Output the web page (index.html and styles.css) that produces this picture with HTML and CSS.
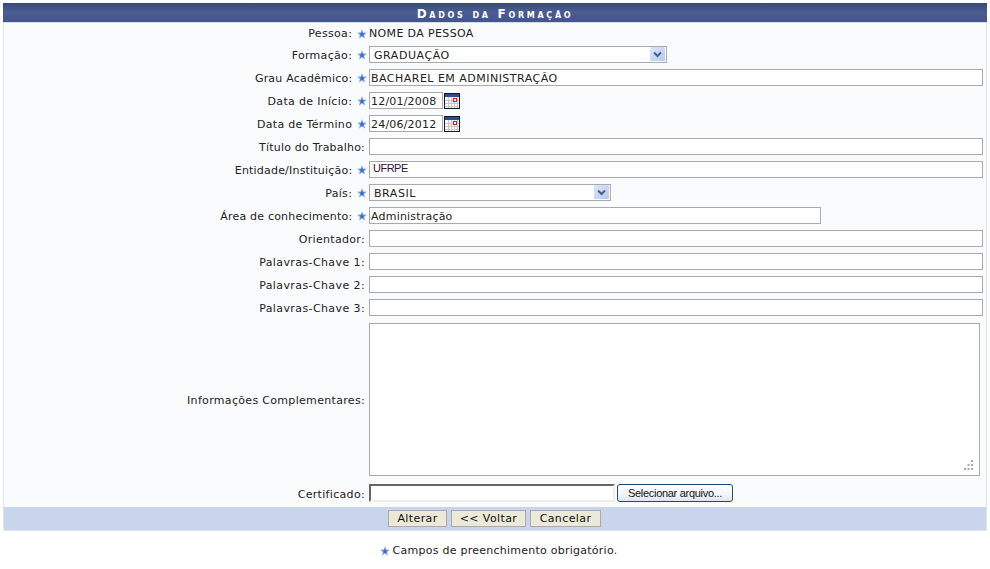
FILE: index.html
```html
<!DOCTYPE html>
<html lang="pt-BR">
<head>
<meta charset="utf-8">
<title>Dados da Formação</title>
<link rel="stylesheet" href="styles.css">
</head>
<body>
<svg class="defs" width="0" height="0" aria-hidden="true">
  <symbol id="star" viewBox="0 0 10 10">
    <path d="M5 .3 6.300 3.500 9.800 3.700 7.100 5.900 8 9.600 5 7.600 2 9.600 2.900 5.900.2 3.700 3.700 3.500Z" fill="#7ea2e6"/>
    <path d="M5 2.500 5.800 4.400 7.600 4.600 6.200 5.800 6.600 7.700 5 6.600 3.400 7.700 3.800 5.800 2.400 4.600 4.200 4.400Z" fill="#3a66bd"/>
  </symbol>
  <symbol id="cal" viewBox="0 0 16 16">
    <rect x=".5" y=".5" width="15" height="15" fill="#fff" stroke="#10182c"/>
    <rect x="1" y="1" width="14" height="3" fill="#2e4a90"/>
    <path d="M1 7.500H15M1 10.500H15M1 13.500H15M4.500 4V15M7.500 4V15M10.500 4V15M13.500 4V15" stroke="#c8c8c8" fill="none"/>
    <rect x="9.500" y="5.500" width="3" height="3" fill="#fff" stroke="#e8141c"/>
  </symbol>
  <symbol id="arrow" viewBox="0 0 16 15">
    <defs>
      <linearGradient id="arrowbg" x1="0" y1="0" x2="1" y2="1">
        <stop offset="0" stop-color="#dde7fb"/>
        <stop offset="1" stop-color="#b4c7f2"/>
      </linearGradient>
    </defs>
    <rect width="15" height="14" rx="1" fill="url(#arrowbg)"/>
    <path d="M4 5.500 7.500 9 11 5.500" fill="none" stroke="#4d6185" stroke-width="2"/>
  </symbol>
  <symbol id="grip" viewBox="0 0 10 10">
    <path d="M7 0h2v2H7zM3.500 4h2v2h-2zM7 4h2v2H7zM0 8h2v2H0zM3.500 8h2v2h-2zM7 8h2v2H7z" fill="#aaa"/>
  </symbol>
</svg>

<form class="panel">
  <h1 class="panel-title">Dados da Formação</h1>
  <div class="fields">
    <label class="lbl req top">Pessoa: <svg class="star"><use href="#star"/></svg></label>
    <div class="ctl plain">NOME DA PESSOA</div>

    <label class="lbl req">Formação: <svg class="star"><use href="#star"/></svg></label>
    <div class="ctl">
      <span class="sel w-formacao">
        <select><option>GRADUAÇÃO</option></select>
        <svg class="arrow"><use href="#arrow"/></svg>
      </span>
    </div>

    <label class="lbl req tight">Grau Acadêmico: <svg class="star"><use href="#star"/></svg></label>
    <div class="ctl"><input class="txt w-full caps" value="BACHAREL EM ADMINISTRAÇÃO"></div>

    <label class="lbl req">Data de Início: <svg class="star"><use href="#star"/></svg></label>
    <div class="ctl"><input class="txt w-date" value="12/01/2008"><svg class="cal"><use href="#cal"/></svg></div>

    <label class="lbl req">Data de Término <svg class="star"><use href="#star"/></svg></label>
    <div class="ctl"><input class="txt w-date" value="24/06/2012"><svg class="cal"><use href="#cal"/></svg></div>

    <label class="lbl tight">Título do Trabalho:</label>
    <div class="ctl"><input class="txt w-full"></div>

    <label class="lbl req tight">Entidade/Instituição: <svg class="star"><use href="#star"/></svg></label>
    <div class="ctl"><input class="txt w-full inst" value="UFRPE"></div>

    <label class="lbl req">País: <svg class="star"><use href="#star"/></svg></label>
    <div class="ctl">
      <span class="sel w-pais">
        <select><option>BRASIL</option></select>
        <svg class="arrow"><use href="#arrow"/></svg>
      </span>
    </div>

    <label class="lbl req tight">Área de conhecimento: <svg class="star"><use href="#star"/></svg></label>
    <div class="ctl"><input class="txt w-area" value="Administração"></div>

    <label class="lbl">Orientador:</label>
    <div class="ctl"><input class="txt w-full"></div>

    <label class="lbl loose">Palavras-Chave 1:</label>
    <div class="ctl"><input class="txt w-full"></div>

    <label class="lbl loose">Palavras-Chave 2:</label>
    <div class="ctl"><input class="txt w-full"></div>

    <label class="lbl loose">Palavras-Chave 3:</label>
    <div class="ctl"><input class="txt w-full"></div>

    <label class="lbl area-row">Informações Complementares:</label>
    <div class="ctl area-row">
      <span class="notes-wrap">
        <textarea class="notes"></textarea>
        <svg class="grip"><use href="#grip"/></svg>
      </span>
    </div>

    <label class="lbl file-row">Certificado:</label>
    <div class="ctl file-row"><input class="file-path"><button type="button" class="file-btn">Selecionar arquivo...</button></div>
  </div>
  <div class="actions">
    <button type="button" class="act act-alterar">Alterar</button>
    <button type="button" class="act act-voltar">&lt;&lt; Voltar</button>
    <button type="button" class="act act-cancelar">Cancelar</button>
  </div>
</form>
<p class="note"><svg class="star"><use href="#star"/></svg><span>Campos de preenchimento obrigatório.</span></p>
</body>
</html>
```
FILE: styles.css
```css
* { box-sizing: border-box; }
html, body { margin: 0; padding: 0; background: #fff; }
body {
  padding: 3px 3px 0;
  font: 11px "DejaVu Sans", Verdana, sans-serif;
  color: #222;
}
.defs { position: absolute; }

.panel {
  width: 984px;
  margin: 0;
  background: #f9fbfd;
  border: solid #dfe3ea;
  border-width: 0 1px 1px;
}
.panel-title {
  margin: 0 -1px;
  height: 20px;
  line-height: 22px;
  text-align: center;
  font-size: 12px;
  font-weight: bold;
  font-variant: small-caps;
  letter-spacing: 2.7px;
  color: #fff;
  background: linear-gradient(#38497c, #4a5c90 45%, #43558a);
  border-bottom: 1px solid #d5dcea;
}

.fields {
  display: grid;
  grid-template-columns: 365px 1fr;
  row-gap: 6px;
  padding: 2px 0 5px;
  align-items: center;
}
.lbl {
  display: flex;
  justify-content: flex-end;
  align-items: center;
  padding: 2px 4px 0 0;
  letter-spacing: .32px;
  white-space: pre;
}
.lbl.req { padding-right: 2px; }
.lbl.tight { letter-spacing: .2px; }
.lbl.loose { letter-spacing: .4px; }
.lbl.top { padding-top: 3px; line-height: 12px; }
.star { width: 10px; height: 10px; margin-top: -1px; margin-left: 1px; flex: none; }
.ctl { display: flex; align-items: center; min-height: 15px; }
.plain { padding-top: 3px; line-height: 12px; letter-spacing: .36px; }

.txt, .file-path {
  height: 17px;
  margin: 0;
  font: inherit;
  letter-spacing: .2px;
  color: #222;
  background: #fff;
  border: 1px solid #aaa;
  border-radius: 0;
  padding: 1px 1px 0;
  outline: none;
}
.caps { letter-spacing: .48px; }
.w-full { width: 614px; }
.w-date { width: 74px; }
.w-area { width: 452px; }
.inst {
  padding: 0 3px 3px;
  letter-spacing: -.5px;
  color: #301040;
  font-family: "Liberation Sans", sans-serif;
}
.cal { width: 16px; height: 16px; margin-left: 1px; }

.sel { position: relative; display: block; height: 17px; }
.w-formacao { width: 298px; }
.w-pais { width: 242px; }
.sel select {
  appearance: none;
  display: block;
  width: 100%;
  height: 17px;
  margin: 0;
  padding: 1px 0 0 4px;
  font: inherit;
  letter-spacing: .55px;
  color: #222;
  background: #fff;
  border: 1px solid #aaa;
  border-radius: 0;
  outline: none;
}
.arrow { position: absolute; right: 1px; top: 1px; width: 16px; height: 15px; pointer-events: none; }

.area-row { margin-top: 1px; }
.notes-wrap { position: relative; display: block; width: 611px; height: 153px; }
.notes {
  display: block;
  width: 100%;
  height: 100%;
  margin: 0;
  resize: none;
  background: #fff;
  border: 1px solid #aaa;
  border-radius: 0;
  outline: none;
}
.grip { position: absolute; right: 6px; bottom: 6px; width: 10px; height: 10px; pointer-events: none; }

.file-row { margin-top: 2px; }
.file-path {
  width: 246px;
  height: 18px;
  border: 2px solid;
  border-color: #666 #eee #eee #666;
}
.file-btn {
  width: 116px;
  height: 18px;
  margin: 0 0 0 2px;
  padding: 0;
  font: 11px "Liberation Sans", Arial, sans-serif;
  letter-spacing: -.3px;
  color: #111;
  background: linear-gradient(#fff, #f3f5f9 60%, #dfe5ef);
  border: 1px solid #1c4a80;
  border-radius: 3px;
}

.actions {
  display: flex;
  justify-content: center;
  gap: 4px;
  height: 23px;
  padding: 3px 1px 0 0;
  background: #c8d5ec;
}
.act {
  height: 17px;
  margin: 0;
  padding: 0;
  font: inherit;
  letter-spacing: .4px;
  color: #111;
  background: #ece9d8;
  border: 1px solid #aaa;
  border-radius: 0;
}
.act-alterar { width: 59px; }
.act-voltar { width: 75px; }
.act-cancelar { width: 71px; }

.note {
  display: flex;
  justify-content: center;
  align-items: center;
  gap: 3px;
  margin: 13px 0 0;
  padding-left: 7px;
  line-height: 14px;
  letter-spacing: .25px;
}
.note .star { margin: 0; }
```
